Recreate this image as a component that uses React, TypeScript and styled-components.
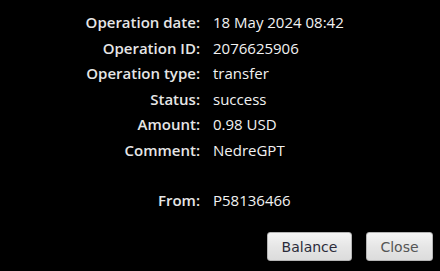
import React from 'react';
import styled, { createGlobalStyle } from 'styled-components';

const GlobalStyle = createGlobalStyle`
  html, body {
    margin: 0;
    padding: 0;
    background: #000;
  }
`;

const Dialog = styled.div`
  width: 440px;
  height: 271px;
  background: #000;
  box-sizing: border-box;
  display: flex;
  flex-direction: column;
  font-family: 'Open Sans', 'Noto Sans', sans-serif;
`;

const Details = styled.div`
  display: grid;
  grid-template-columns: 200px 1fr;
  column-gap: 13px;
  padding-top: 10px;
`;

const Label = styled.div`
  text-align: right;
  color: #e6e6e6;
  font-weight: 600;
  font-size: 15px;
  line-height: 25.5px;
`;

const Value = styled.div`
  color: #f2f2f2;
  font-weight: 400;
  font-size: 15px;
  line-height: 25.5px;
`;

const Spacer = styled.div`
  grid-column: 1 / 3;
  height: 25px;
`;

const Footer = styled.div`
  margin-top: auto;
  display: flex;
  justify-content: flex-end;
  gap: 14px;
  padding: 0 7px 10px 0;
`;

const Button = styled.button<{ $muted?: boolean; $w: number }>`
  width: ${(p) => p.$w}px;
  height: 29px;
  padding: 0;
  border: 1px solid #b4b4b4;
  border-radius: 3px;
  background: linear-gradient(#f4f4f4, #e6e6e6 50%, #dcdcdc);
  color: ${(p) => (p.$muted ? '#555' : '#2b2b3a')};
  font-family: Tahoma, 'DejaVu Sans', sans-serif;
  font-size: 14px;
  cursor: pointer;
`;

const rows: [string, string][] = [
  ['Operation date:', '18 May 2024 08:42'],
  ['Operation ID:', '2076625906'],
  ['Operation type:', 'transfer'],
  ['Status:', 'success'],
  ['Amount:', '0.98 USD'],
  ['Comment:', 'NedreGPT'],
];

export default function App() {
  return (
    <>
      <GlobalStyle />
      <Dialog>
        <Details>
          {rows.map(([label, value]) => (
            <React.Fragment key={label}>
              <Label>{label}</Label>
              <Value>{value}</Value>
            </React.Fragment>
          ))}
          <Spacer />
          <Label>{'From:'}</Label>
          <Value>{'P58136466'}</Value>
        </Details>
        <Footer>
          <Button $w={85}>{'Balance'}</Button>
          <Button $muted $w={67}>{'Close'}</Button>
        </Footer>
      </Dialog>
    </>
  );
}
